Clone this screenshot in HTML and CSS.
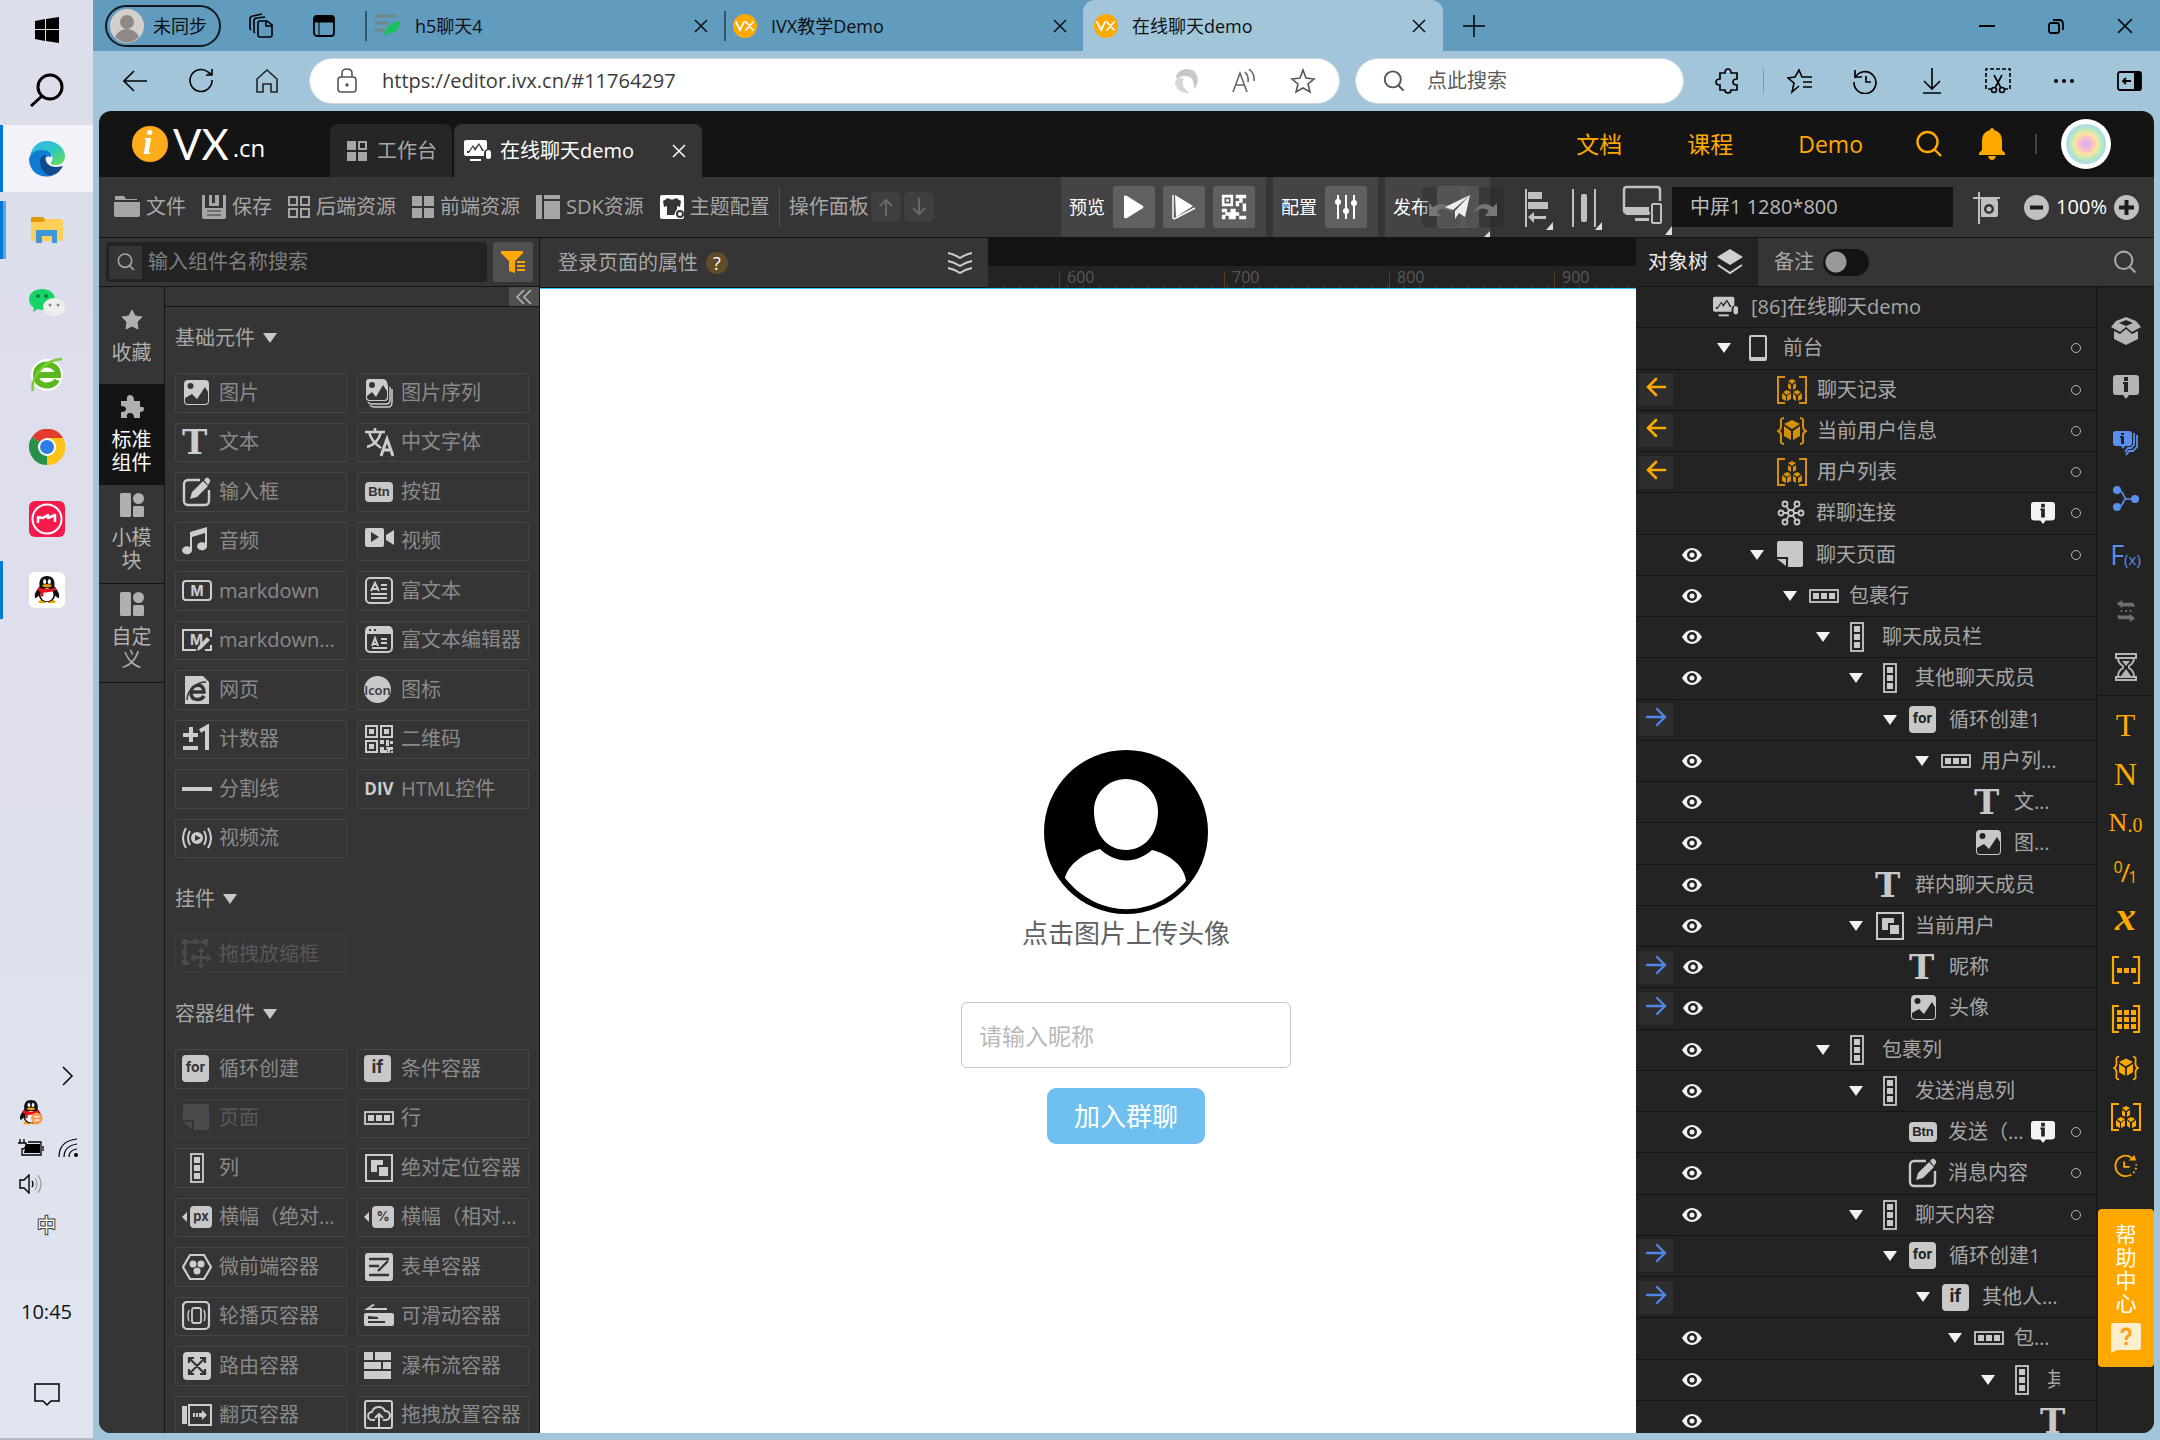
FILE: index.html
```html
<!DOCTYPE html>
<html lang="zh-CN">
<head>
<meta charset="utf-8">
<meta name="viewport" content="width=device-width, initial-scale=1">
<title>在线聊天demo</title>
<link rel="stylesheet" href="styles.css">
</head>
<body>
<svg class="sprite" aria-hidden="true">
  <defs>
    <linearGradient id="edge-top" x1="0" y1="0" x2="1" y2="1"><stop offset="0" stop-color="#35b5f0"/><stop offset=".5" stop-color="#2dc6c2"/><stop offset="1" stop-color="#6fe04a"/></linearGradient>
    <radialGradient id="rainbow"><stop offset="0" stop-color="#c9b8f0"/><stop offset=".3" stop-color="#fbb8cc"/><stop offset=".55" stop-color="#fbe6a0"/><stop offset=".8" stop-color="#b5e8c0"/><stop offset="1" stop-color="#a8d8f0"/></radialGradient>
  </defs>
  <symbol id="i-image" viewBox="0 0 30 30"><path fill="currentColor" fill-rule="evenodd" d="M6 2h17a4 4 0 0 1 4 4v17a4 4 0 0 1-4 4H6a4 4 0 0 1-4-4V6a4 4 0 0 1 4-4zM8.500 5a3 3 0 1 0 0 6 3 3 0 0 0 0-6zM3 20v3c0 2 1 3 3 3h17c2 0 3-1 3-3V14l-3-5-8 12-5-5z"/></symbol>
  <symbol id="i-images" viewBox="0 0 30 30"><path fill="currentColor" fill-rule="evenodd" d="M5 1h13c3 0 4 1 5 3l1 4v12c0 2-1 3-3 3H5c-2 0-3-1-3-3V4c0-2 1-3 3-3zM8 4a3 3 0 1 0 0 6 3 3 0 0 0 0-6zM3 18v1c0 2 1 3 3 3h14c2 0 3-1 3-3v-6l-4-6-7 12-4-5z"/><path d="M4 24c1 2 2 2 4 2h14c3 0 4-1 4-4V9M6 27c1 2 2 2 4 2h14c3 0 4-2 4-5V11" fill="none" stroke="currentColor" stroke-width="1.500"/></symbol>
  <symbol id="i-lang" viewBox="0 0 30 30"><g fill="none" stroke="currentColor" stroke-width="2.600"><path d="M1 5h20M11 1v4M5 5c2 8 6 12 12 16M17 5c-2 8-7 13-14 15"/><path d="M17 29l6-17 6 17M19 23h8" stroke-width="3"/></g></symbol>
  <symbol id="i-edit" viewBox="0 0 30 30"><path d="M18 3H6a4 4 0 0 0-4 4v17a4 4 0 0 0 4 4h17a4 4 0 0 0 4-4V13" fill="none" stroke="currentColor" stroke-width="2.400"/><path fill="currentColor" d="M8 22l2-7L21 4l5 5-11 11zM22 3l2-2c2-1 5 2 4 4l-2 3z"/></symbol>
  <symbol id="i-music" viewBox="0 0 30 30"><path fill="currentColor" d="M8 6l17-5v20a5 4 0 1 1-2-4V7L10 11v14a5 4 0 1 1-2-4z"/></symbol>
  <symbol id="i-video" viewBox="0 0 30 30"><path fill="currentColor" fill-rule="evenodd" d="M3 2h15q2 0 2 2v15q0 2-2 2H3q-2 0-2-2V4q0-2 2-2zm4 4v10l8-5zM22 9l8-5v15l-8-5z"/></symbol>
  <symbol id="i-doc" viewBox="0 0 30 30"><rect x="2" y="2" width="26" height="25" rx="4" fill="none" stroke="currentColor" stroke-width="2"/><path d="M7 15l4-8 4 8M9 13h5M17 9h6M17 13h6M7 18h16M7 22h16" fill="none" stroke="currentColor" stroke-width="2"/></symbol>
  <symbol id="i-doc2" viewBox="0 0 30 30"><rect x="2" y="2" width="26" height="25" rx="4" fill="none" stroke="currentColor" stroke-width="2"/><path fill="currentColor" fill-rule="evenodd" d="M2 9V5q0-4 4-4h18q4 0 4 4v4zM5 4v2h2V4zm5 0v2h2V4z"/><path d="M8 21l3-8 3 8M9 19h5M17 14h6M17 18h6M8 23h15" fill="none" stroke="currentColor" stroke-width="2"/></symbol>
  <symbol id="i-web" viewBox="0 0 30 30"><path fill="currentColor" d="M3 1h18l6 6v22H3z"/><path d="M10 17h12c0-10-13-8-13 1 0 8 10 8 13 3" fill="none" stroke="#353535" stroke-width="3.500"/><path d="M5 25C5 15 15 7 24 7" fill="none" stroke="#353535" stroke-width="1.500"/></symbol>
  <symbol id="i-count" viewBox="0 0 30 30"><path d="M1 11h15M9 3v15M1 24h15M18 7l7-4v23" fill="none" stroke="currentColor" stroke-width="4"/></symbol>
  <symbol id="i-qr" viewBox="0 0 30 30"><path fill="currentColor" fill-rule="evenodd" d="M1 1h13v13H1zM3 3v9h9V3zM5 5h5v5H5zM16 1h13v13H16zM18 3v9h9V3zM20 5h5v5h-5zM1 16h13v13H1zM3 18v9h9v-9zM5 20h5v5H5zM16 16h4v4h-4zM22 16h3v6h-3zM26 17h3v3h-3zM16 23h4v3h4v3h-8zM22 23h7v3h-3v3h-2zM27 27h2v2h-2z"/></symbol>
  <symbol id="i-line" viewBox="0 0 30 30"><path fill="currentColor" d="M0 13h30v4H0z"/></symbol>
  <symbol id="i-stream" viewBox="0 0 30 30"><path fill="currentColor" fill-rule="evenodd" d="M15 9a6 6 0 1 0 0 12 6 6 0 0 0 0-12zm-2 3l6 3-6 3z"/><path d="M8 8q-4 7 0 14M22 8q4 7 0 14M4 5q-6 10 0 20M26 5q6 10 0 20" fill="none" stroke="currentColor" stroke-width="2"/></symbol>
  <symbol id="i-drag" viewBox="0 0 30 30"><path d="M24 8V3H3v21h5" fill="none" stroke="currentColor" stroke-width="2.500"/><path fill="currentColor" d="M0 0h5v5H0zM11 0h5v5h-5zM21 0h5v5h-5zM0 11h5v5H0zM0 21h5v5H0zM19 8l4 5h-3v4h5v-3l5 5-5 4v-3h-5v5h3l-4 5-4-5h3v-5h-5v3l-5-4 5-5v3h5v-4h-3z"/></symbol>
  <symbol id="i-page" viewBox="0 0 30 30"><path fill="currentColor" d="M3 1h22q2 0 2 2v22q0 2-2 2H12V17H1V3q0-2 2-2zM1 19h9v7z"/></symbol>
  <symbol id="i-row" viewBox="0 0 30 30"><rect x="1" y="9" width="28" height="12" fill="none" stroke="currentColor" stroke-width="1.800"/><path fill="currentColor" d="M4 12h6v6H4zM12 12h6v6h-6zM20 12h6v6h-6z"/></symbol>
  <symbol id="i-col" viewBox="0 0 30 30"><rect x="9" y="1" width="12" height="28" fill="none" stroke="currentColor" stroke-width="1.800"/><path fill="currentColor" d="M12 4h6v6h-6zM12 12h6v6h-6zM12 20h6v6h-6z"/></symbol>
  <symbol id="i-abs" viewBox="0 0 30 30"><rect x="2" y="2" width="26" height="26" fill="none" stroke="currentColor" stroke-width="2"/><path fill="currentColor" d="M7 7h12v5h-6v7H7zM15 14h9v9h-9z"/></symbol>
  <symbol id="i-hex" viewBox="0 0 30 30"><path d="M8 3h14l7 12-7 12H8L1 15z" fill="none" stroke="currentColor" stroke-width="2.200"/><circle cx="11" cy="12" r="3.500" fill="currentColor"/><circle cx="19" cy="12" r="3.500" fill="currentColor"/><circle cx="15" cy="19" r="3.500" fill="currentColor"/></symbol>
  <symbol id="i-form" viewBox="0 0 30 30"><rect x="1" y="1" width="28" height="28" rx="3" fill="currentColor"/><path d="M5 7h20M5 14h10M5 23h20M14 19L24 9" fill="none" stroke="#353535" stroke-width="2.400"/></symbol>
  <symbol id="i-carousel" viewBox="0 0 30 30"><rect x="1" y="1" width="26" height="27" rx="4" fill="none" stroke="currentColor" stroke-width="2.200"/><rect x="10" y="7" width="9" height="15" rx="2" fill="none" stroke="currentColor" stroke-width="1.800"/><path d="M7 9q-2 6 0 11M22 9q2 6 0 11" fill="none" stroke="currentColor" stroke-width="1.400"/></symbol>
  <symbol id="i-slide" viewBox="0 0 30 30"><path fill="currentColor" fill-rule="evenodd" d="M0 9L9 3l2 1-5 3h17v2zM2 12h26q2 0 2 2v9q0 2-2 2H2q-2 0-2-2v-9q0-2 2-2zm2 3v3h10v-2zm0 5v2h17v-2z"/></symbol>
  <symbol id="i-route" viewBox="0 0 30 30"><rect x="1" y="1" width="28" height="28" rx="4" fill="currentColor"/><path d="M8 8l14 14M22 8L8 22M7 12V7h5M18 7h5v5M7 18v5h5M18 23h5v-5" fill="none" stroke="#353535" stroke-width="2.200"/></symbol>
  <symbol id="i-fall" viewBox="0 0 30 30"><path fill="currentColor" d="M0 1h9v8H0zM11 1h16v8H11zM0 11h17v7H0zM19 11h8v7h-8zM0 20h27v8H0z"/></symbol>
  <symbol id="i-flip" viewBox="0 0 30 30"><path fill="currentColor" d="M0 6h5v18H0zM11 13h2v4h-2zM14 13h2v4h-2zM17 13h3v-3l5 5-5 5v-3h-3z"/><rect x="7" y="5" width="22" height="20" fill="none" stroke="currentColor" stroke-width="2"/></symbol>
  <symbol id="i-drop" viewBox="0 0 30 30"><rect x="1" y="1" width="27" height="27" rx="2" fill="none" stroke="currentColor" stroke-width="2"/><path d="M11 20H8a4 4 0 0 1 0-8 7 7 0 0 1 13-1 4 4 0 0 1 1 9h-3M15 28V15M11 18l4-4 4 4" fill="none" stroke="currentColor" stroke-width="2"/></symbol>
  <symbol id="i-mdedit" viewBox="0 0 30 30"><path d="M29 12V5H1v20h13M23 25h6v-5" fill="none" stroke="currentColor" stroke-width="2"/><path fill="currentColor" d="M16 22L25 12l3 3-9 9-4 2z"/></symbol>
  <symbol id="i-star" viewBox="0 0 24 24"><path fill="currentColor" stroke="currentColor" stroke-linejoin="round" d="M12 2l3 6 7 1-5 5 1 7-6-3-6 3 1-7-5-5 7-1z"/></symbol>
  <symbol id="i-puzzle" viewBox="0 0 24 24"><path fill="currentColor" d="M1 6h6q-1-6 3-6t4 6h6v6q4-1 4 2t-4 3v6h-6q0-5-4-5t-3 5H1v-6q5 0 5-3t-5-3z"/></symbol>
  <symbol id="i-module" viewBox="0 0 24 24"><rect width="11" height="24" rx="1.500" fill="currentColor"/><circle cx="18.500" cy="5.500" r="5.500" fill="currentColor"/><rect x="13" y="13" width="11" height="11" rx="1.500" fill="currentColor"/></symbol>
  <symbol id="i-screen" viewBox="0 0 28 24"><path fill="currentColor" fill-rule="evenodd" d="M2 1h19q2 0 2 2v7q-3 1-3 4v3H2q-2 0-2-2V3q0-2 2-2zm1 11v2h2l4-6 2 4 4-6 3 6h2l-5-8-4 5-2-3-4 6z"/><path fill="currentColor" d="M6 20h11v2H6z"/><rect x="22" y="11" width="5" height="9" rx="2.500" fill="currentColor"/></symbol>
  <symbol id="i-phone" viewBox="0 0 30 30"><path fill="currentColor" fill-rule="evenodd" d="M8 2h14q2 0 2 2v22q0 2-2 2H8q-2 0-2-2V4q0-2 2-2zm0 2v20h14V4z"/></symbol>
  <symbol id="i-cube" viewBox="0 0 30 30"><path d="M7 2Q3 2 4 7v3q0 4-3 5 3 1 3 5v3q-1 5 3 5M23 2q4 0 3 5v3q0 4 3 5-3 1-3 5v3q1 5-3 5" fill="none" stroke="currentColor" stroke-width="2"/><path fill="currentColor" d="M15 4l8 4-8 5-8-5zM7 10l7 5v9l-7-4zM23 10l-7 5v9l7-4z"/></symbol>
  <symbol id="i-cubes" viewBox="0 0 30 30"><path d="M8 2H1v26h7M22 2h7v26h-7" fill="none" stroke="currentColor" stroke-width="2"/><path fill="currentColor" d="M15 4l4 2-4 3-4-3zM11 8l3 2v5l-3-2zM19 8l-3 2v5l3-2zM10 15l4 2-4 3-4-3zM5 18l4 3v5l-4-2zM14 18l-4 3v5l4-2zM20 15l4 2-4 3-4-3zM16 18l3 3v5l-3-2zM25 18l-4 3v5l4-2z"/></symbol>
  <symbol id="i-net" viewBox="0 0 30 30"><g fill="none" stroke="currentColor" stroke-width="1.800"><circle cx="15" cy="15" r="3"/><circle cx="9" cy="6" r="2.500"/><circle cx="21" cy="6" r="2.500"/><circle cx="5" cy="15" r="2.500"/><circle cx="25" cy="15" r="2.500"/><circle cx="9" cy="24" r="2.500"/><circle cx="21" cy="24" r="2.500"/><path d="M13 12l-3-4M17 12l3-4M12 15H8M18 15h4M13 18l-3 4M17 18l3 4"/></g></symbol>
  <symbol id="i-eye" viewBox="0 0 20 16"><path fill="currentColor" fill-rule="evenodd" d="M0 8q4-7 10-7t10 7q-4 7-10 7T0 8zM10 3a5 5 0 1 0 0 10 5 5 0 0 0 0-10z"/><circle cx="10" cy="8" r="2.500" fill="currentColor"/></symbol>
  <symbol id="i-in" viewBox="0 0 22 22"><path d="M20 11H3M11 3l-8 8 8 8" fill="none" stroke="#ffa800" stroke-width="2.600" stroke-linecap="round"/></symbol>
  <symbol id="i-out" viewBox="0 0 22 22"><path d="M2 11h17M12 3l8 8-8 8" fill="none" stroke="#4f86e8" stroke-width="2.300" stroke-linecap="round"/></symbol>
  <symbol id="i-info" viewBox="0 0 26 26"><path fill="currentColor" fill-rule="evenodd" d="M3 1h20q3 0 3 3v14q0 3-3 3h-7l-3 4-3-4H3q-3 0-3-3V4q0-3 3-3zm8 2v4h4V3zM10 8v2h1v8h4V8z"/></symbol>
  <symbol id="i-infos" viewBox="0 0 26 26"><path fill="currentColor" fill-rule="evenodd" d="M3 1h13q3 0 3 3v9q0 3-3 3h-4l-2 3-2-3H3q-3 0-3-3V4q0-3 3-3zm5 2v2h3V3zM7 6v2h1v6h3V6z"/><path d="M21 3v12l-3 3h-3l-3 4M24 5v12l-4 4h-4l-3 4" fill="none" stroke="currentColor" stroke-width="1.800"/></symbol>
  <symbol id="i-box" viewBox="0 0 30 28"><path fill="currentColor" fill-rule="evenodd" d="M15 0l10 4 5 6-9 5-6-5-6 5-9-5 5-6zm0 3L8 6l7 3 7-3zM3 14l6 3 6-5 6 5 6-3v8l-12 6-12-6z"/></symbol>
  <symbol id="i-branch" viewBox="0 0 26 26"><circle cx="4" cy="4" r="4" fill="currentColor"/><circle cx="4" cy="21" r="4" fill="currentColor"/><circle cx="22" cy="13" r="4" fill="currentColor"/><path d="M4 4q4 0 6 4 2 5 4 5h7M4 21q4 0 6-4 1-4 4-4" fill="none" stroke="currentColor" stroke-width="1.700"/></symbol>
  <symbol id="i-swap" viewBox="0 0 26 26"><path fill="currentColor" d="M3 5l6-4v3h11q3 1 2 5l-2-1H9v2zM23 21l-6 4v-3H6q-3-1-2-5l2 1h11v-2zM7 12h2v2H7zM12 12h2v2h-2zM17 12h2v2h-2z"/></symbol>
  <symbol id="i-hour" viewBox="0 0 26 30"><path d="M3 2h20v4H3zM3 25h20v3H3zM5 6q0 5 5 8v2q-5 3-5 8M21 6q0 5-5 8v2q5 3 5 8" fill="none" stroke="currentColor" stroke-width="2"/><path fill="currentColor" d="M8 24l5-7 5 7zM9 9h8l-4 5z"/></symbol>
  <symbol id="i-arr" viewBox="0 0 30 30"><path d="M8 2H2v26h6M22 2h6v26h-6" fill="none" stroke="currentColor" stroke-width="2.200"/><path fill="currentColor" d="M6 13h5v5H6zM13 13h5v5h-5zM20 13h5v5h-5z"/></symbol>
  <symbol id="i-arr2" viewBox="0 0 30 30"><path d="M8 2H2v26h6M22 2h6v26h-6" fill="none" stroke="currentColor" stroke-width="2.200"/><path fill="currentColor" d="M6 6h5v5H6zM13 6h5v5h-5zM20 6h5v5h-5zM6 13h5v5H6zM13 13h5v5h-5zM20 13h5v5h-5zM6 20h5v5H6zM13 20h5v5h-5zM20 20h5v5h-5z"/></symbol>
  <symbol id="i-time" viewBox="0 0 26 26"><path d="M19 4A11 11 0 1 0 17 23" fill="none" stroke="currentColor" stroke-width="2"/><path d="M11 8v6h6" fill="none" stroke="currentColor" stroke-width="2"/><path d="M17 23A11 11 0 0 0 24 11" fill="none" stroke="currentColor" stroke-width="2" stroke-dasharray="2 2.500"/><path fill="currentColor" d="M16 7h8l-2-6z"/></symbol>
  <symbol id="i-search" viewBox="0 0 30 30"><circle cx="13.500" cy="13" r="10" fill="none" stroke="currentColor" stroke-width="2.400"/><path d="M20 20l7 7" stroke="currentColor" stroke-width="2.400"/></symbol>
  <symbol id="i-close" viewBox="0 0 14 14"><path d="M1 1l12 12M13 1L1 13" fill="none" stroke="currentColor" stroke-width="1.500"/></symbol>
  <symbol id="i-vx" viewBox="0 0 24 24"><circle cx="12" cy="12" r="12" fill="#ffa800"/><path d="M3 8l4 8 4-8M13 8l7 8M20 8l-7 8" fill="none" stroke="#fff" stroke-width="1.800" stroke-linecap="round"/></symbol>
  <symbol id="i-penguin" viewBox="0 0 28 30"><path fill="#f5a000" d="M5 27q4-3 8 0v2H5zM15 27q4-3 8 0v2h-8z"/><path fill="#111" d="M14 0c6 0 9 4 8 11 3 4 6 8 5 12-1 2-3-1-4-2-1 4-4 7-9 7s-8-3-9-7c-1 1-3 4-4 2-1-4 2-8 5-12C5 4 8 0 14 0z"/><ellipse cx="14" cy="20" rx="7" ry="7" fill="#fff"/><path fill="#e8121c" d="M5 12q9 4 18 0l1 3q-7 3-14 3v4H7v-5q-2-1-3-2z"/><ellipse cx="11.500" cy="6" rx="1.700" ry="2.500" fill="#fff"/><ellipse cx="16.500" cy="6" rx="1.700" ry="2.500" fill="#fff"/><ellipse cx="14" cy="10.500" rx="5" ry="1.600" fill="#f5a000"/></symbol>
</svg>

<div class="desktop">
  <aside class="taskbar" aria-label="任务栏">
    <div class="task-head">
      <button class="task" aria-label="开始"><svg width="24" height="26" viewBox="0 0 24 26"><path d="M0 4l10-2v10H0zM11 2l13-2v12H11zM0 13h10v11L0 22zM11 13h13v13l-13-2z"/></svg></button>
      <button class="task" aria-label="搜索"><svg width="34" height="34" viewBox="0 0 34 34" fill="none" stroke="#000" stroke-width="3"><circle cx="20" cy="14" r="12"/><path d="M12 23L1 33"/></svg></button>
    </div>
    <div class="task-apps">
      <button class="task is-current is-open" aria-label="Edge"><svg width="36" height="36" viewBox="0 0 36 36"><path fill="url(#edge-top)" d="M1 15C3 5 10 0 18 0c10 0 18 7 18 15 0 6-4 9-9 9-6 0-6-2-4-4 2-4-1-9-9-9C8 11 3 13 1 15z"/><path fill="#0f7bd3" d="M0 18C1 12 7 9 13 9c8 0 10 5 9 7-7-3-9 6-6 11 2 4 6 7 9 7C12 39 0 31 0 18z"/><path fill="#114a8b" d="M11 20c0-4 3-6 6-6-2 6 2 12 10 12 3 0 6-1 6-1 1 0 0 2-1 3-8 12-21 5-21-8z"/></svg></button>
      <button class="task is-multi" aria-label="文件管理器"><svg width="32" height="26" viewBox="0 0 32 26"><path fill="#dd9a05" d="M0 2q0-2 2-2h10l3 3-2 3H0z"/><path fill="#ffcf59" d="M0 5h12l3-3h15q2 0 2 2v18q0 2-2 2H2q-2 0-2-2z"/><path fill="#3b96da" d="M5 14q0-1 1-1h20v13h-5v-7H11v7H5z"/></svg></button>
      <button class="task" aria-label="微信"><svg width="36" height="30" viewBox="0 0 36 30"><path fill="#16d466" d="M13 1c7 0 13 4 13 10s-6 11-13 11l-4-1-5 3 1-4C2 18 0 15 0 11 0 5 6 1 13 1z"/><circle cx="9" cy="8" r="1.800" fill="#0d6b3b"/><circle cx="17" cy="8" r="1.800" fill="#0d6b3b"/><ellipse cx="25" cy="19" rx="11" ry="9" fill="#eee"/><circle cx="21" cy="17" r="1.500" fill="#888"/><circle cx="29" cy="17" r="1.500" fill="#888"/></svg></button>
      <button class="task" aria-label="360浏览器"><svg width="34" height="36" viewBox="0 0 34 36"><circle cx="17" cy="18" r="16" fill="#fff"/><path d="M6 18h22c0-14-22-14-22 0 0 13 17 13 21 5" fill="none" stroke="#5cb81f" stroke-width="6"/><path d="M3 34C0 20 16 2 32 2" fill="none" stroke="#79cf32" stroke-width="2.500"/></svg></button>
      <button class="task" aria-label="Chrome"><svg width="36" height="36" viewBox="0 0 36 36"><path fill="#e33b2e" d="M18 18L3 8a18 18 0 0 1 31 1z"/><path fill="#fcc419" d="M18 18l16-9a18 18 0 0 1-16 27z"/><path fill="#299147" d="M18 18v18A18 18 0 0 1 3 8z"/><path fill="#fcc419" d="M18 9h16l-8 13-8 14 8-17z"/><circle cx="18" cy="18" r="9" fill="#fff"/><circle cx="18" cy="18" r="7" fill="#317bea"/></svg></button>
      <button class="task" aria-label="Meitu"><svg width="36" height="36" viewBox="0 0 36 36"><rect width="36" height="36" rx="6" fill="#f5194c"/><circle cx="18" cy="18" r="14.500" fill="none" stroke="#fff" stroke-width="2"/><path d="M9 22v-6l5 1 5-3v3l7-3v7" fill="none" stroke="#fff" stroke-width="2.500" stroke-linejoin="round"/></svg></button>
      <button class="task is-tall" aria-label="QQ"><span class="qq-tile"><svg width="26" height="30"><use href="#i-penguin"/></svg></span></button>
    </div>
    <div class="tray">
      <button class="tray-more" aria-label="更多"><svg width="12" height="20" viewBox="0 0 12 20"><path d="M1 1l9 9-9 9" fill="none" stroke="#000" stroke-width="1.500"/></svg></button>
      <div class="tray-grid">
        <svg width="24" height="25" viewBox="0 0 28 30"><use href="#i-penguin"/><circle cx="21" cy="22" r="7" fill="#ff9a55"/><path d="M18 20h6M18 24h6" stroke="#fff" stroke-width="1.500"/></svg>
        <span></span>
        <svg width="26" height="18" viewBox="0 0 26 18"><path d="M8 5h14v9H6z"/><path d="M2 0v4M6 0v4M0 4h8v3q-1 3-4 3v6h19V3H10M25 7v5" fill="none" stroke="#000" stroke-width="1.300"/></svg>
        <svg width="20" height="20" viewBox="0 0 20 20"><path d="M1 19Q1 3 19 1M6 19q0-11 13-13M11 19q0-7 8-8" fill="none" stroke="#000" stroke-width="1.200"/><circle cx="18" cy="17" r="2"/></svg>
        <svg width="24" height="20" viewBox="0 0 24 20"><path d="M1 6h4l5-5v18l-5-5H1zM13 7q2 3 0 6" fill="none" stroke="#000" stroke-width="1.400"/><path d="M16 4q4 6 0 12M19 1q6 9 0 18" fill="none" stroke="#999" stroke-width="1.200"/></svg>
        <span></span>
      </div>
      <span class="ime">中</span>
      <time class="clock">10:45</time>
      <button class="notice" aria-label="通知"><svg width="26" height="26" viewBox="0 0 26 26"><path d="M1 2h24v17h-8l-4 4-4-4H1z" fill="none" stroke="#000" stroke-width="1.500"/></svg></button>
    </div>
  </aside>

  <div class="browser">
    <header class="tabstrip">
      <button class="profile"><svg width="34" height="34" viewBox="0 0 34 34"><circle cx="17" cy="17" r="17" fill="#d3d0cc"/><circle cx="17" cy="13" r="7" fill="#8f8a86"/><path fill="#8f8a86" d="M5 28q4-8 12-8t12 8q-12 11-24 0z"/></svg><span>未同步</span></button>
      <button class="bar-btn workspace" aria-label="工作区"><svg width="26" height="26" viewBox="0 0 26 26" fill="none" stroke="#000" stroke-width="1.600"><path d="M12 8h7l5 4v10q0 2-2 2H12q-2 0-2-2V10q0-2 2-2zM18 8v5h6M7 20l-1-1V8q0-3 3-3l8-1M3 17l-1-1V6q0-3 3-3l9-2"/></svg></button>
      <button class="bar-btn tabmenu" aria-label="标签操作"><svg width="24" height="24" viewBox="0 0 24 24"><rect x="2" y="2" width="20" height="20" rx="3" fill="none" stroke="#000" stroke-width="1.800"/><path d="M2 3q0-1 2-1h16q2 0 2 2v4H2zM7 8v14" stroke="#000"/></svg></button>
      <a class="tab tab-a" href="#h5"><svg width="26" height="24" viewBox="0 0 26 24"><path d="M0 2h21M0 9h13M0 16h10" stroke="#6f8787" stroke-width="3"/><path fill="#19c15b" d="M9 23q0-13 16-16-1 13-12 12z"/></svg><span>h5聊天4</span><svg class="x" width="14" height="14"><use href="#i-close"/></svg></a>
      <a class="tab tab-b" href="#ivx"><svg width="24" height="24"><use href="#i-vx"/></svg><span>IVX教学Demo</span><svg class="x" width="14" height="14"><use href="#i-close"/></svg></a>
      <a class="tab tab-c is-active" href="#chat"><svg width="24" height="24"><use href="#i-vx"/></svg><span>在线聊天demo</span><svg class="x" width="14" height="14"><use href="#i-close"/></svg></a>
      <button class="bar-btn newtab" aria-label="新标签页"><svg width="22" height="22" viewBox="0 0 22 22"><path d="M11 0v22M0 11h22" stroke="#000" stroke-width="1.500"/></svg></button>
      <div class="window-ctl">
        <button class="bar-btn" aria-label="最小化"><svg width="16" height="16" viewBox="0 0 16 16"><path d="M0 8h16" stroke="#000" stroke-width="2"/></svg></button>
        <button class="bar-btn" aria-label="还原"><svg width="16" height="16" viewBox="0 0 16 16" fill="none" stroke="#000" stroke-width="1.800"><rect x="1" y="5" width="10" height="10" rx="2"/><path d="M5 2h6q4 0 4 4v6"/></svg></button>
        <button class="bar-btn" aria-label="关闭"><svg width="16" height="16"><use href="#i-close"/></svg></button>
      </div>
    </header>

    <nav class="navbar">
      <button class="bar-btn" aria-label="后退"><svg width="24" height="22" viewBox="0 0 24 22" fill="none" stroke="#000" stroke-width="1.600"><path d="M24 11H1M11 1L1 11l10 10"/></svg></button>
      <button class="bar-btn" aria-label="刷新"><svg width="26" height="26" viewBox="0 0 26 26" fill="none" stroke="#000" stroke-width="1.600"><path d="M24 12a11 11 0 1 1-4-8l4 3M24 1v6h-6"/></svg></button>
      <button class="bar-btn" aria-label="主页"><svg width="24" height="26" viewBox="0 0 24 26" fill="none" stroke="#222" stroke-width="1.600"><path d="M2 11L12 2l10 9v13h-6v-8H8v8H2z"/></svg></button>
      <form class="address">
        <svg width="20" height="26" viewBox="0 0 20 26" fill="none" stroke="#555" stroke-width="1.600"><rect x="1" y="9" width="18" height="15" rx="3"/><path d="M5 9V5q0-4 5-4t5 4v4"/><circle cx="10" cy="17" r="1"/></svg>
        <input aria-label="地址" value="https://editor.ivx.cn/#11764297">
        <button type="button" class="bar-btn" aria-label="扩展"><svg width="24" height="26" viewBox="0 0 24 26"><path fill="#c8c8c8" d="M2 8C5 1 14-1 20 3c5 5 5 13 0 18 0-9-2-13-9-13-4 0-7 2-8 4z"/><path fill="#d6d6d6" d="M1 14c2-4 6-5 9-3-3 4-1 10 6 14C8 26 1 21 1 14z"/></svg></button>
        <button type="button" class="bar-btn" aria-label="朗读"><svg width="24" height="24" viewBox="0 0 24 24" fill="none" stroke="#666" stroke-width="1.600"><path d="M1 23L8 4l7 19M4 16h9M13 3q4 4 3 10M17 0q6 5 5 12"/></svg></button>
        <button type="button" class="bar-btn" aria-label="收藏"><svg width="26" height="26" viewBox="0 0 26 26" fill="none" stroke="#555" stroke-width="1.600"><path d="M13 2l3 8 8 1-6 5 2 8-7-4-7 4 2-8-6-5 8-1z"/></svg></button>
      </form>
      <form class="quicksearch"><svg width="24" height="24"><use href="#i-search"/></svg><input aria-label="搜索" placeholder="点此搜索"></form>
      <div class="nav-tools">
        <button class="bar-btn" aria-label="插件"><svg width="26" height="26" viewBox="0 0 26 26" fill="none" stroke="#000" stroke-width="1.700"><path d="M5 5h5q0-4 3-4t3 4h6v6q-4 0-4 3t4 3v5h-6q0 3-3 3t-3-3H5v-5q-4 0-4-3t4-3z"/></svg></button>
        <i class="rule"></i>
        <button class="bar-btn" aria-label="收藏夹"><svg width="26" height="26" viewBox="0 0 26 26" fill="none" stroke="#000" stroke-width="1.600"><path d="M12 18l-7 6 2-9-6-5 7-1 4-7 3 7h10M16 14h9M16 19h9"/></svg></button>
        <button class="bar-btn" aria-label="历史"><svg width="26" height="26" viewBox="0 0 26 26" fill="none" stroke="#000" stroke-width="1.700"><path d="M2 10a11 11 0 1 1-1 4M2 2v7h7M13 8v6h5"/></svg></button>
        <button class="bar-btn" aria-label="下载"><svg width="20" height="26" viewBox="0 0 20 26" fill="none" stroke="#000" stroke-width="1.600"><path d="M10 0v21M2 13l8 8 8-8M1 25h18"/></svg></button>
        <button class="bar-btn" aria-label="截图"><svg width="26" height="26" viewBox="0 0 26 26" fill="none" stroke="#000" stroke-width="1.600"><path d="M7 21H1V1h24v20h-5" stroke-dasharray="4 2"/><path d="M9 7l7 13M17 7l-7 13"/><circle cx="9" cy="22" r="2.500"/><circle cx="17" cy="22" r="2.500"/></svg></button>
        <button class="bar-btn" aria-label="更多"><svg width="22" height="6" viewBox="0 0 22 6"><circle cx="3" cy="3" r="2"/><circle cx="11" cy="3" r="2"/><circle cx="19" cy="3" r="2"/></svg></button>
        <button class="bar-btn" aria-label="侧栏"><svg width="26" height="20" viewBox="0 0 26 20"><rect x="1" y="1" width="23" height="18" rx="2" fill="none" stroke="#000" stroke-width="1.800"/><path d="M17 1h7v18h-7z"/><path d="M14 10H6M9 7l-3 3 3 3" fill="none" stroke="#000" stroke-width="1.800"/></svg></button>
      </div>
    </nav>

    <main class="app">
      <header class="app-head">
        <a class="logo" href="#home"><svg width="36" height="36" viewBox="0 0 36 36"><circle cx="18" cy="18" r="18" fill="#ffac1c"/></svg><span class="logo-i">i</span><span class="logo-vx">VX</span><span class="logo-cn">.cn</span></a>
        <a class="doc-tab doc-home" href="#workbench"><svg width="20" height="20" viewBox="0 0 20 20"><path fill="currentColor" fill-rule="evenodd" d="M0 0h9v9H0zM11 0h9v9h-9zM13 2v5h5V2zM0 11h9v9H0zM11 11h9v9h-9z"/></svg><span>工作台</span></a>
        <a class="doc-tab doc-open" href="#chat"><svg width="28" height="24"><use href="#i-screen"/></svg><span>在线聊天demo</span><svg class="x" width="14" height="14"><use href="#i-close"/></svg></a>
        <nav class="head-nav">
          <a href="#doc">文档</a><a href="#course">课程</a><a href="#demo">Demo</a>
          <button class="hd-search" aria-label="搜索"><svg width="30" height="30"><use href="#i-search"/></svg></button>
          <button class="hd-bell" aria-label="通知"><svg width="30" height="34" viewBox="0 0 30 34"><path fill="currentColor" d="M13 3q0-2 2-2t2 2q8 2 8 11v9l3 3v2H2v-2l3-3v-9q0-9 8-11zM11 29h8q-1 4-4 4t-4-4z"/></svg></button>
          <i class="rule"></i>
          <svg class="me" width="50" height="50" viewBox="0 0 50 50"><circle cx="25" cy="25" r="25" fill="#fff"/><circle cx="25" cy="25" r="20" fill="url(#rainbow)"/></svg>
        </nav>
      </header>

      <div class="toolbar">
        <div class="menu">
          <button><svg width="26" height="22" viewBox="0 0 26 22"><path fill="currentColor" d="M1 0h9l2 3h11v1H1zM0 6h26v13q0 2-2 2H2q-2 0-2-2z"/></svg>文件</button>
          <button><svg width="24" height="24" viewBox="0 0 24 24"><path fill="currentColor" d="M0 0h3v13h18V0h3v22q0 2-2 2H2q-2 0-2-2zM7 0h3v8h3V0h4v11H7z"/><path d="M5 16h14M5 20h14" stroke="#353535"/></svg>保存</button>
          <button><svg width="22" height="22" viewBox="0 0 22 22"><path d="M1 1h8v8H1zM13 1h8v8h-8zM1 13h8v8H1zM13 13h8v8h-8z" fill="none" stroke="currentColor" stroke-width="2"/></svg>后端资源</button>
          <button><svg width="22" height="22" viewBox="0 0 22 22"><path d="M0 0h10v10H0zM12 0h10v10H12zM0 12h10v10H0zM12 12h10v10H12z" fill="currentColor"/></svg>前端资源</button>
          <button><svg width="24" height="24" viewBox="0 0 24 24"><path d="M0 0h6v24H0zM8 0h16v4H8zM8 6h16v18H8z" fill="currentColor"/></svg>SDK资源</button>
          <button><svg width="24" height="24" viewBox="0 0 24 24"><rect width="24" height="24" rx="2" fill="#fff"/><path fill="#353535" d="M3 6l5-3q4 3 8 0l5 3-1 6-3-1v3l-3 6H7V11l-3 1z"/><circle cx="20" cy="19" r="5" fill="#fff"/><circle cx="20" cy="19" r="3" fill="none" stroke="#353535" stroke-width="2"/></svg>主题配置</button>
        </div>
        <div class="panel-ops"><span>操作面板</span><button aria-label="上移"><svg width="16" height="18" viewBox="0 0 16 18"><path d="M8 18V2M2 8l6-6 6 6" fill="none" stroke="currentColor" stroke-width="2"/></svg></button><button aria-label="下移"><svg width="16" height="18" viewBox="0 0 16 18"><path d="M8 0v16M2 10l6 6 6-6" fill="none" stroke="currentColor" stroke-width="2"/></svg></button></div>
        <div class="runs">
          <div class="run"><span>预览</span>
            <button aria-label="预览"><svg width="24" height="26" viewBox="0 0 24 26"><path fill="#fff" d="M2 3q0-3 3-1l16 10q1 1 0 2L5 24q-3 1-3-1z"/></svg></button>
            <button aria-label="调试"><svg width="26" height="28" viewBox="0 0 26 28"><path fill="#fff" d="M4 2l18 11L5 24z"/><path d="M2 2v22q0 3 3 1l19-10" fill="none" stroke="#fff" stroke-width="1.500"/></svg></button>
            <button aria-label="二维码预览"><svg width="26" height="26" viewBox="0 0 30 30"><path fill="#fff" fill-rule="evenodd" d="M1 1h13v13H1zM4 4v7h7V4zM6 6h3v3H6zM17 1h12v4h-4v5h-4v4h-4V8h4V5h-4zM25 11h4v9h-4zM1 17h6v4h4v-4h6v4h4v4h-4v4H9v-4H5v4H1v-5h4v-3H1zM21 25h8v4h-8z"/></svg></button>
          </div>
          <div class="run"><span>配置</span><button aria-label="配置"><svg width="24" height="24" viewBox="0 0 24 24"><path d="M4 0v24M12 0v24M20 0v24" stroke="#fff" stroke-width="2"/><circle cx="4" cy="7" r="3" fill="#fff"/><circle cx="12" cy="16" r="3" fill="#fff"/><circle cx="20" cy="8" r="3" fill="#fff"/></svg></button></div>
          <div class="run publish"><span>发布</span>
            <div class="history"><button aria-label="撤销"><svg width="24" height="20" viewBox="0 0 24 20"><path fill="currentColor" d="M0 6v13h12l-4-5q6-6 16 2Q16 2 4 10z"/></svg></button><button aria-label="重做"><svg width="24" height="20" viewBox="0 0 24 20"><path fill="currentColor" d="M24 6v13H12l4-5Q10 8 0 16 8 2 20 10z"/></svg></button></div>
            <button class="send" aria-label="发布"><svg width="26" height="26" viewBox="0 0 26 26"><path fill="#eee" d="M25 1L0 13l8 3zM25 1L10 17v8l4-6 6 4z"/></svg></button>
          </div>
        </div>
        <div class="view-tools">
          <button class="v-align" aria-label="对齐"><svg width="30" height="46" viewBox="0 0 30 46"><path fill="currentColor" d="M2 5h2v38H2zM5 8h14v7H5zM5 18h20v7H5zM5 33l6-5v4h12v3H11v4z"/><path fill="#ddd" d="M30 38v8h-7z"/></svg></button>
          <button class="v-dist" aria-label="分布"><svg width="32" height="46" viewBox="0 0 32 46"><path fill="currentColor" d="M2 5h2v38H2zM24 5h2v38h-2z"/><rect x="11" y="10" width="6" height="28" rx="2" fill="currentColor"/><path fill="#ddd" d="M32 38v8h-7z"/></svg></button>
          <button class="v-device" aria-label="设备"><svg width="52" height="56" viewBox="0 0 52 56"><path d="M30 34H7q-3 0-3-3V11q0-3 3-3h30q3 0 3 3v11" fill="none" stroke="currentColor" stroke-width="2.500"/><path fill="currentColor" d="M4 28h25v8H6zM15 39h14v3H15z"/><rect x="32" y="25" width="9" height="19" rx="1" fill="none" stroke="currentColor" stroke-width="2"/><path fill="#ddd" d="M52 47v9h-7z"/></svg></button>
          <select class="screen" aria-label="屏幕尺寸"><option>中屏1 1280*800</option></select>
          <button class="v-cam" aria-label="截图"><svg width="34" height="34" viewBox="0 0 34 34"><path d="M7 2v32M1 8h27" stroke="currentColor" stroke-width="2"/><path fill="currentColor" fill-rule="evenodd" d="M10 9h15l1 3v13q0 2-2 2H9V9zm7 5a5 5 0 1 0 0 10 5 5 0 0 0 0-10z"/><circle cx="17" cy="19" r="2.500" fill="currentColor"/></svg></button>
          <button class="v-zoom" aria-label="缩小"><svg width="25" height="25" viewBox="0 0 25 25"><circle cx="12.500" cy="12.500" r="12.500" fill="currentColor"/><path d="M6 12.500h13" stroke="#1c1c1c" stroke-width="4"/></svg></button>
          <output>100%</output>
          <button class="v-zoom" aria-label="放大"><svg width="25" height="25" viewBox="0 0 25 25"><circle cx="12.500" cy="12.500" r="12.500" fill="currentColor"/><path d="M5 12.500h15M12.500 5v15" stroke="#1c1c1c" stroke-width="4"/></svg></button>
        </div>
      </div>

      <div class="workspace-row">
        <section class="library">
          <div class="lib-search">
            <label class="lib-field"><span class="lib-glass"><svg width="20" height="20"><use href="#i-search"/></svg></span><input aria-label="输入组件名称搜索" placeholder="输入组件名称搜索"></label>
            <button class="filter" aria-label="筛选"><svg width="24" height="22" viewBox="0 0 24 22"><path fill="#ffa800" d="M0 0h22v2l-8 8v12l-6-2V10L0 2zM16 10h8v2h-8zM16 14h8v2h-8zM16 18h8v2h-8z"/></svg></button>
          </div>
          <div class="lib-body">
            <nav class="lib-rail">
              <button class="rail-tab fav"><svg width="24" height="24"><use href="#i-star"/></svg><span>收藏</span></button>
              <button class="rail-tab is-active"><svg width="24" height="24"><use href="#i-puzzle"/></svg><span>标准组件</span></button>
              <button class="rail-tab"><svg width="24" height="24"><use href="#i-module"/></svg><span>小模块</span></button>
              <button class="rail-tab"><svg width="24" height="24"><use href="#i-module"/></svg><span>自定义</span></button>
            </nav>
            <div class="lib-main">
              <div class="lib-collapse"><button aria-label="收起"><svg width="16" height="14" viewBox="0 0 16 14"><path d="M8 0L1 7l7 7M15 0L8 7l7 7" fill="none" stroke="#bbb" stroke-width="1.500"/></svg></button></div>
              <h2>基础元件<i class="caret"></i></h2>
              <div class="tiles tiles-basic">
                <button class="tile"><svg class="ico"><use href="#i-image"/></svg><span>图片</span></button>
                <button class="tile"><svg class="ico"><use href="#i-images"/></svg><span>图片序列</span></button>
                <button class="tile"><b class="ico slab">T</b><span>文本</span></button>
                <button class="tile"><svg class="ico"><use href="#i-lang"/></svg><span>中文字体</span></button>
                <button class="tile"><svg class="ico"><use href="#i-edit"/></svg><span>输入框</span></button>
                <button class="tile"><b class="ico chip chip-btn">Btn</b><span>按钮</span></button>
                <button class="tile"><svg class="ico"><use href="#i-music"/></svg><span>音频</span></button>
                <button class="tile"><svg class="ico"><use href="#i-video"/></svg><span>视频</span></button>
                <button class="tile"><b class="ico chip chip-md">M</b><span>markdown</span></button>
                <button class="tile"><svg class="ico"><use href="#i-doc"/></svg><span>富文本</span></button>
                <button class="tile"><svg class="ico"><use href="#i-mdedit"/><text x="8" y="20" class="md-m">M</text></svg><span>markdown编辑器</span></button>
                <button class="tile"><svg class="ico"><use href="#i-doc2"/></svg><span>富文本编辑器</span></button>
                <button class="tile"><svg class="ico"><use href="#i-web"/></svg><span>网页</span></button>
                <button class="tile"><b class="ico chip chip-icon">Icon</b><span>图标</span></button>
                <button class="tile"><svg class="ico"><use href="#i-count"/></svg><span>计数器</span></button>
                <button class="tile"><svg class="ico"><use href="#i-qr"/></svg><span>二维码</span></button>
                <button class="tile"><svg class="ico"><use href="#i-line"/></svg><span>分割线</span></button>
                <button class="tile"><b class="ico div-word">DIV</b><span>HTML控件</span></button>
                <button class="tile"><svg class="ico"><use href="#i-stream"/></svg><span>视频流</span></button>
              </div>
              <h2>挂件<i class="caret"></i></h2>
              <div class="tiles">
                <button class="tile" disabled><svg class="ico"><use href="#i-drag"/></svg><span>拖拽放缩框</span></button>
              </div>
              <h2>容器组件<i class="caret"></i></h2>
              <div class="tiles tiles-box">
                <button class="tile"><b class="ico chip">for</b><span>循环创建</span></button>
                <button class="tile"><b class="ico chip chip-if">if</b><span>条件容器</span></button>
                <button class="tile" disabled><svg class="ico"><use href="#i-page"/></svg><span>页面</span></button>
                <button class="tile"><svg class="ico"><use href="#i-row"/></svg><span>行</span></button>
                <button class="tile"><svg class="ico"><use href="#i-col"/></svg><span>列</span></button>
                <button class="tile"><svg class="ico"><use href="#i-abs"/></svg><span>绝对定位容器</span></button>
                <button class="tile"><b class="ico chip chip-px">px</b><span>横幅（绝对定位）</span></button>
                <button class="tile"><b class="ico chip chip-px">%</b><span>横幅（相对定位）</span></button>
                <button class="tile"><svg class="ico"><use href="#i-hex"/></svg><span>微前端容器</span></button>
                <button class="tile"><svg class="ico"><use href="#i-form"/></svg><span>表单容器</span></button>
                <button class="tile"><svg class="ico"><use href="#i-carousel"/></svg><span>轮播页容器</span></button>
                <button class="tile"><svg class="ico"><use href="#i-slide"/></svg><span>可滑动容器</span></button>
                <button class="tile"><svg class="ico"><use href="#i-route"/></svg><span>路由容器</span></button>
                <button class="tile"><svg class="ico"><use href="#i-fall"/></svg><span>瀑布流容器</span></button>
                <button class="tile"><svg class="ico"><use href="#i-flip"/></svg><span>翻页容器</span></button>
                <button class="tile"><svg class="ico"><use href="#i-drop"/></svg><span>拖拽放置容器</span></button>
              </div>
            </div>
          </div>
        </section>

        <section class="stage">
          <div class="stage-head">
            <div class="props"><span>登录页面的属性</span><button class="help-dot" aria-label="帮助">?</button><button class="expand" aria-label="展开"><svg width="26" height="24" viewBox="0 0 26 24"><path d="M1 2q6 1 12 5 6-4 12-5M1 10q6 1 12 5 6-4 12-5M1 17q6 1 12 5 6-4 12-5" fill="none" stroke="#ccc" stroke-width="2"/></svg></button></div>
            <div class="ruler"><div class="ruler-lead"></div><div class="ruler-seg">600</div><div class="ruler-seg">700</div><div class="ruler-seg">800</div><div class="ruler-seg">900</div></div>
          </div>
          <div class="canvas">
            <form class="login">
              <svg class="portrait" width="165" height="165" viewBox="0 0 165 165"><circle cx="82" cy="82" r="82"/><path fill="#fff" d="M82 29c18 0 32 14 32 32 0 24-14 39-32 39S50 85 50 61c0-18 14-32 32-32zM21 128c3-12 16-24 35-29 16 15 36 15 52 1 20 5 33 18 34 31-33 38-88 38-121-3z"/></svg>
              <p>点击图片上传头像</p>
              <input aria-label="昵称" placeholder="请输入昵称">
              <button type="button">加入群聊</button>
            </form>
          </div>
        </section>

        <aside class="inspector">
          <div class="ins-head">
            <button class="ins-tab">对象树<svg width="26" height="26" viewBox="0 0 26 26"><path fill="#d0d0d0" d="M13 0l13 8-13 8L0 8z"/><path d="M1 16l12 8 12-8" fill="none" stroke="#d0d0d0" stroke-width="2"/></svg></button>
            <label class="toggle">备注<input type="checkbox"></label>
            <button class="ins-search" aria-label="搜索对象"><svg width="26" height="26"><use href="#i-search"/></svg></button>
          </div>
          <div class="ins-body">
            <ul class="tree">
              <li class="root"><i class="evt"></i><i class="eye"></i><svg class="ico screen-ico"><use href="#i-screen"/></svg><span>[86]在线聊天demo</span><i class="dot none"></i></li>
              <li class="l1"><i class="evt"></i><i class="eye"></i><i class="tri"></i><svg class="ico"><use href="#i-phone"/></svg><span>前台</span><i class="dot"></i></li>
              <li class="l2 data"><i class="evt on"><svg><use href="#i-in"/></svg></i><i class="eye"></i><i class="tri none"></i><svg class="ico"><use href="#i-cubes"/></svg><span>聊天记录</span><i class="dot"></i></li>
              <li class="l2 data"><i class="evt on"><svg><use href="#i-in"/></svg></i><i class="eye"></i><i class="tri none"></i><svg class="ico"><use href="#i-cube"/></svg><span>当前用户信息</span><i class="dot"></i></li>
              <li class="l2 data"><i class="evt on"><svg><use href="#i-in"/></svg></i><i class="eye"></i><i class="tri none"></i><svg class="ico"><use href="#i-cubes"/></svg><span>用户列表</span><i class="dot"></i></li>
              <li class="l2"><i class="evt"></i><i class="eye"></i><i class="tri none"></i><svg class="ico"><use href="#i-net"/></svg><span>群聊连接</span><svg class="note"><use href="#i-info"/></svg><i class="dot"></i></li>
              <li class="l2"><i class="evt"></i><i class="eye"><svg><use href="#i-eye"/></svg></i><i class="tri"></i><svg class="ico"><use href="#i-page"/></svg><span>聊天页面</span><i class="dot"></i></li>
              <li class="l3"><i class="evt"></i><i class="eye"><svg><use href="#i-eye"/></svg></i><i class="tri"></i><svg class="ico"><use href="#i-row"/></svg><span>包裹行</span><i class="dot none"></i></li>
              <li class="l4"><i class="evt"></i><i class="eye"><svg><use href="#i-eye"/></svg></i><i class="tri"></i><svg class="ico"><use href="#i-col"/></svg><span>聊天成员栏</span><i class="dot none"></i></li>
              <li class="l5"><i class="evt"></i><i class="eye"><svg><use href="#i-eye"/></svg></i><i class="tri"></i><svg class="ico"><use href="#i-col"/></svg><span>其他聊天成员</span><i class="dot none"></i></li>
              <li class="l6"><i class="evt on"><svg><use href="#i-out"/></svg></i><i class="eye"></i><i class="tri"></i><b class="ico chip">for</b><span>循环创建1</span><i class="dot none"></i></li>
              <li class="l7"><i class="evt"></i><i class="eye"><svg><use href="#i-eye"/></svg></i><i class="tri"></i><svg class="ico"><use href="#i-row"/></svg><span>用户列表行</span><i class="dot none"></i></li>
              <li class="l8"><i class="evt"></i><i class="eye"><svg><use href="#i-eye"/></svg></i><i class="tri none"></i><b class="ico slab">T</b><span>文本1</span><i class="dot none"></i></li>
              <li class="l8"><i class="evt"></i><i class="eye"><svg><use href="#i-eye"/></svg></i><i class="tri none"></i><svg class="ico"><use href="#i-image"/></svg><span>图片1</span><i class="dot none"></i></li>
              <li class="l5"><i class="evt"></i><i class="eye"><svg><use href="#i-eye"/></svg></i><i class="tri none"></i><b class="ico slab">T</b><span>群内聊天成员</span><i class="dot none"></i></li>
              <li class="l5"><i class="evt"></i><i class="eye"><svg><use href="#i-eye"/></svg></i><i class="tri"></i><svg class="ico"><use href="#i-abs"/></svg><span>当前用户</span><i class="dot none"></i></li>
              <li class="l6"><i class="evt on"><svg><use href="#i-out"/></svg></i><i class="eye"><svg><use href="#i-eye"/></svg></i><i class="tri none"></i><b class="ico slab">T</b><span>昵称</span><i class="dot none"></i></li>
              <li class="l6"><i class="evt on"><svg><use href="#i-out"/></svg></i><i class="eye"><svg><use href="#i-eye"/></svg></i><i class="tri none"></i><svg class="ico"><use href="#i-image"/></svg><span>头像</span><i class="dot none"></i></li>
              <li class="l4"><i class="evt"></i><i class="eye"><svg><use href="#i-eye"/></svg></i><i class="tri"></i><svg class="ico"><use href="#i-col"/></svg><span>包裹列</span><i class="dot none"></i></li>
              <li class="l5"><i class="evt"></i><i class="eye"><svg><use href="#i-eye"/></svg></i><i class="tri"></i><svg class="ico"><use href="#i-col"/></svg><span>发送消息列</span><i class="dot none"></i></li>
              <li class="l6"><i class="evt"></i><i class="eye"><svg><use href="#i-eye"/></svg></i><i class="tri none"></i><b class="ico chip chip-btn">Btn</b><span>发送（按钮）</span><svg class="note"><use href="#i-info"/></svg><i class="dot"></i></li>
              <li class="l6"><i class="evt"></i><i class="eye"><svg><use href="#i-eye"/></svg></i><i class="tri none"></i><svg class="ico"><use href="#i-edit"/></svg><span>消息内容</span><i class="dot"></i></li>
              <li class="l5"><i class="evt"></i><i class="eye"><svg><use href="#i-eye"/></svg></i><i class="tri"></i><svg class="ico"><use href="#i-col"/></svg><span>聊天内容</span><i class="dot"></i></li>
              <li class="l6"><i class="evt on"><svg><use href="#i-out"/></svg></i><i class="eye"></i><i class="tri"></i><b class="ico chip">for</b><span>循环创建1</span><i class="dot none"></i></li>
              <li class="l7"><i class="evt on"><svg><use href="#i-out"/></svg></i><i class="eye"></i><i class="tri"></i><b class="ico chip chip-if">if</b><span>其他人消息</span><i class="dot none"></i></li>
              <li class="l8"><i class="evt"></i><i class="eye"><svg><use href="#i-eye"/></svg></i><i class="tri"></i><svg class="ico"><use href="#i-row"/></svg><span>包裹行</span><i class="dot none"></i></li>
              <li class="l9"><i class="evt"></i><i class="eye"><svg><use href="#i-eye"/></svg></i><i class="tri"></i><svg class="ico"><use href="#i-col"/></svg><span class="cut">其</span><i class="dot none"></i></li>
              <li class="l10"><i class="evt"></i><i class="eye"><svg><use href="#i-eye"/></svg></i><i class="tri none"></i><b class="ico slab">T</b><i class="dot none"></i></li>
            </ul>
            <div class="side">
              <div class="side-top">
                <button aria-label="资源"><svg width="30" height="28"><use href="#i-box"/></svg></button>
                <button aria-label="信息"><svg width="26" height="26"><use href="#i-info"/></svg></button>
                <button class="blue" aria-label="信息组"><svg width="26" height="26"><use href="#i-infos"/></svg></button>
                <button class="blue" aria-label="连线"><svg width="26" height="26"><use href="#i-branch"/></svg></button>
                <button class="blue fx">F<small>(x)</small></button>
                <button class="dim" aria-label="交换"><svg width="24" height="26"><use href="#i-swap"/></svg></button>
                <button aria-label="计时"><svg width="26" height="30"><use href="#i-hour"/></svg></button>
              </div>
              <div class="side-vars">
                <button class="serif">T</button>
                <button class="serif">N</button>
                <button class="serif dec">N<small>.0</small></button>
                <button class="frac"><sup>0</sup>/<sub>1</sub></button>
                <button class="serif var">x</button>
                <button aria-label="一维数组"><svg width="30" height="30"><use href="#i-arr"/></svg></button>
                <button aria-label="二维数组"><svg width="30" height="30"><use href="#i-arr2"/></svg></button>
                <button aria-label="对象"><svg width="26" height="26"><use href="#i-cube"/></svg></button>
                <button aria-label="对象数组"><svg width="30" height="30"><use href="#i-cubes"/></svg></button>
                <button aria-label="时间"><svg width="24" height="24"><use href="#i-time"/></svg></button>
              </div>
              <button class="help"><span>帮助中心</span><svg width="30" height="30" viewBox="0 0 30 30"><path fill="#ffeecb" d="M3 0h24q3 0 3 3v21q0 3-3 3H6l-6 3V3q0-3 3-3z"/><path d="M11 10q0-4 4-4t4 4q0 2-2 3t-2 4M15 19v3" fill="none" stroke="#ff9c12" stroke-width="3"/></svg></button>
            </div>
          </div>
        </aside>
      </div>
    </main>
  </div>
</div>
</body>
</html>
```
FILE: styles.css
```css
* { box-sizing: border-box; }

:root {
  --panel: #353535;
  --deep: #232323;
  --black: #141414;
  --text: #a6a6a6;
  --accent: #ffa800;
}

body {
  margin: 0;
  font-family: "Open Sans", "Noto Sans CJK SC", sans-serif;
  font-size: 20px;
  line-height: 24px;
  color: var(--text);
}

button, input, select {
  margin: 0;
  padding: 0;
  border: 0;
  background: none;
  color: inherit;
  font: inherit;
}

button { display: flex; align-items: center; justify-content: center; }
input, select { outline: none; }
svg { flex: none; display: block; }
i { font-style: normal; }
a { color: inherit; text-decoration: none; }
ul, h2, p { margin: 0; padding: 0; font-weight: inherit; font-size: inherit; }
.sprite { position: absolute; width: 0; height: 0; }

.desktop { display: flex; height: 100vh; overflow: hidden; }

/* taskbar */
.taskbar {
  flex: 0 0 93px;
  display: flex;
  flex-direction: column;
  background: linear-gradient(#dddeeb, #dedeec 50%, #dfe5f1);
  border-bottom: 2px solid #b4b8c4;
}
.task-head { display: grid; grid-auto-rows: 60px; height: 125px; }
.task-apps { display: grid; grid-auto-rows: 67px; gap: 5px; }
.is-current { background: #f2f2f8; }
.is-open { box-shadow: inset 3px 0 #0078d7; }
.is-tall, .is-multi { height: 58px; margin-top: 4px; box-shadow: inset 3px 0 #0078d7; }
.is-multi { box-shadow: inset 3px 0 #0078d7, inset 6px 0 #5ea5e0; }
.qq-tile { display: flex; justify-content: center; padding: 3px 5px; background: #fff; border-radius: 6px; }
.tray { margin-top: auto; display: flex; flex-direction: column; align-items: center; color: #111; padding-bottom: 28px; }
.tray-more { margin: 0 0 8px 42px; }
.tray-grid { display: grid; grid-template-columns: 37px 37px; grid-auto-rows: 36px; align-items: center; justify-items: center; margin-left: 6px; }
.ime { margin-top: 12px; font-weight: 700; color: #fff; -webkit-text-stroke: 1px #444; }
.clock { margin: 62px 0 56px; }
.notice { height: 30px; }

/* browser chrome */
.browser { flex: 1; min-width: 0; display: flex; flex-direction: column; background: #a3c5da; }
.tabstrip { flex: 0 0 51px; display: flex; align-items: center; padding-left: 12px; background: #619bbe; color: #0b1013; font-size: 18px; }
.profile { gap: 9px; width: 116px; height: 42px; padding-left: 3px; justify-content: flex-start; border: 2px solid #101820; border-radius: 21px; }
.bar-btn { flex: none; }
.workspace { margin-left: 27px; }
.tabmenu { margin-left: 38px; }
.tab { display: flex; align-items: center; gap: 14px; height: 51px; }
.tab .x { margin-left: auto; }
.tab-a { width: 359px; margin-left: 29px; padding: 0 16px 0 10px; background: linear-gradient(#33566b, #33566b) left center / 2px 30px no-repeat; }
.tab-b { width: 359px; padding: 0 16px 0 9px; background: linear-gradient(#33566b, #33566b) left center / 2px 30px no-repeat; }
.tab-c { width: 360px; padding: 0 17px 0 11px; background: #a3c5da; border-radius: 12px 12px 0 0; }
.newtab { margin-left: 20px; }
.window-ctl { display: flex; gap: 53px; margin: 0 27px 0 auto; }

.navbar { flex: 0 0 60px; display: flex; align-items: center; padding: 0 18px 0 30px; color: #555; }
.navbar > .bar-btn { width: 24px; margin-right: 42px; }
.address, .quicksearch { display: flex; align-items: center; height: 46px; background: #fff; border: 1px solid #c9d6e0; border-radius: 23px; }
.address { flex: 1; gap: 34px; margin-left: -12px; padding: 0 23px 0 27px; }
.address input { flex: 1; min-width: 0; margin-left: -9px; color: #3a3a3a; }
.quicksearch { width: 329px; margin-left: 15px; padding-left: 26px; gap: 21px; }
.quicksearch input { width: 240px; }
.quicksearch input::placeholder { color: #5c5c5c; opacity: 1; }
.nav-tools { display: flex; align-items: center; gap: 41px; margin-left: 31px; }
.nav-tools .bar-btn { width: 25px; }
.nav-tools .rule { width: 1px; height: 24px; margin: 0 -18px; background: #7d98a8; }

/* application */
.app { flex: 1; min-height: 0; display: flex; flex-direction: column; margin: 0 6px 7px; border-radius: 12px; overflow: hidden; background: var(--black); }
.app-head { flex: 0 0 66px; display: flex; align-items: flex-end; }
.logo { position: relative; display: flex; align-items: center; width: 231px; height: 66px; padding-left: 33px; color: #fff; }
.logo-i { position: absolute; left: 44px; top: 14px; font: italic bold 34px/36px "Liberation Serif", serif; }
.logo-vx { margin-left: 5px; font: 400 42px/42px Lato, sans-serif; }
.logo-cn { margin: 8px 0 0 4px; font-size: 24px; }
.doc-tab { display: flex; align-items: center; height: 53px; border-radius: 8px 8px 0 0; }
.doc-home { width: 122px; padding-left: 17px; gap: 10px; background: #262626; }
.doc-open { width: 248px; margin-left: 2px; padding: 0 16px 0 10px; gap: 8px; background: var(--panel); color: #fff; }
.doc-open .x { margin-left: auto; }
.head-nav { display: flex; align-items: center; height: 66px; margin-left: auto; padding-right: 43px; color: var(--accent); font-size: 23px; }
.head-nav a { margin-right: 65px; }
.head-nav .hd-search { margin-left: -14px; }
.hd-bell { margin-left: 33px; }
.head-nav .rule { width: 2px; height: 20px; margin: 0 24px 0 28px; background: #444; }

.toolbar { flex: 0 0 61px; display: flex; align-items: center; background: var(--panel); border-bottom: 1px solid var(--black); }
.menu { display: flex; gap: 16px; padding-left: 15px; }
.menu button { gap: 6px; }
.panel-ops { display: flex; align-items: center; gap: 3px; height: 40px; margin-left: 9px; padding-left: 9px; border-left: 1px solid #505050; }
.panel-ops button { width: 30px; height: 30px; border-radius: 5px; background: #3f3f3f; color: #686868; }
.panel-ops span { margin-right: -1px; }
.runs { display: flex; gap: 7px; height: 60px; margin-left: auto; font-size: 18px; color: #fff; }
.run { position: relative; display: flex; align-items: center; gap: 8px; padding: 0 11px 0 8px; background: #444; }
.run > button { width: 42px; height: 42px; border-radius: 3px; background: #606060; }
.publish::after { content: ""; position: absolute; right: 0; bottom: 0; border: 3px solid #ddd; border-top-color: transparent; border-left-color: transparent; }
.publish .send { position: relative; background: rgba(110, 110, 110, 0.5); }
.history { position: absolute; left: 37px; top: 10px; display: flex; gap: 6px; color: #777; }
.history button { width: 38px; height: 40px; border-radius: 4px; background: rgba(34, 34, 34, 0.3); }
.view-tools { display: flex; align-items: center; margin-left: 33px; padding-right: 15px; color: #c0c0c0; }
.v-dist { margin: 0 18px 0 17px; }
.screen { width: 281px; height: 40px; padding-left: 18px; background: var(--black); color: #bbb; appearance: none; }
.v-cam { margin: 0 18px 0 19px; }
.view-tools output { width: 65px; text-align: center; color: #fff; }

.workspace-row { flex: 1; min-height: 0; display: flex; }

/* component library */
.library { flex: 0 0 441px; display: flex; flex-direction: column; background: var(--panel); border-right: 1px solid var(--black); }
.lib-search { flex: 0 0 49px; display: flex; gap: 6px; padding: 4px 6px 4px 7px; border-bottom: 1px solid var(--black); }
.lib-field { flex: 1; display: flex; align-items: center; gap: 6px; padding-left: 3px; border-radius: 4px; background: var(--deep); }
.lib-glass { display: flex; align-items: center; justify-content: center; width: 33px; height: 33px; background: var(--panel); }
.lib-field input { flex: 1; }
.lib-field input::placeholder { color: #7e7e7e; opacity: 1; }
.filter { width: 40px; height: 40px; background: #505050; border-radius: 3px; }
.lib-body { flex: 1; min-height: 0; display: flex; }
.lib-rail { flex: 0 0 66px; border-right: 1px solid var(--black); }
.rail-tab { flex-direction: column; justify-content: flex-start; gap: 9px; width: 100%; height: 99px; padding: 8px 12px 0; border-bottom: 1px solid var(--black); line-height: 23px; color: #b0b0b0; }
.rail-tab.fav { padding-top: 21px; height: 98px; }
.rail-tab.is-active { background: var(--black); padding-top: 10px; height: 100px; }
.rail-tab.is-active span { color: #fff; }
.rail-tab span { width: 40px; }
.lib-main { flex: 1; min-width: 0; }
.lib-collapse { display: flex; justify-content: flex-end; height: 20px; border-bottom: 1px solid var(--black); }
.lib-collapse button { width: 30px; background: #505050; }
.lib-main h2 { display: flex; align-items: center; gap: 8px; height: 66px; padding: 0 10px 4px; }
.tiles + h2 { margin-top: 10px; }
.caret, .tri { border: 7px solid transparent; border-top: 10px solid #c8c8c8; border-bottom: 0; }
.tiles { display: grid; grid-template-columns: 1fr 1fr; grid-auto-rows: minmax(39px, 1fr); gap: 10px; padding: 0 10px; }
.tiles-basic { height: 485px; }
.tiles-box { height: 386px; }
.tile { justify-content: flex-start; min-width: 0; padding: 0 2px 0 6px; gap: 7px; border: 1px solid #464646; border-radius: 3px; color: #8a8a8a; }
.tile span { min-width: 0; overflow: hidden; text-overflow: ellipsis; white-space: nowrap; line-height: 36px; }
.tile .ico { color: #cdcdcd; }
.tile .chip { color: #353535; }
.tile:disabled { color: #585858; border-color: #3d3d3d; }
.tile:disabled .ico { color: #4a4a4a; }

.ico { flex: none; width: 30px; height: 30px; }
.slab { font: bold 34px/30px "DejaVu Serif", serif; text-align: left; }
.chip { display: flex; align-items: center; justify-content: center; width: 27px; height: 27px; margin-right: 3px; padding: 0 0 3px; border-radius: 4px; background: #c8c8c8; color: var(--deep); font: bold 14px/20px Inter, sans-serif; }
.chip-btn { width: 28px; height: 20px; margin: 0 1px; padding: 0; font: bold 13px/18px "Liberation Sans", sans-serif; }
.chip-if { font-size: 18px; }
.chip-icon { border-radius: 50%; padding: 0; font: 600 13px/20px "Open Sans", sans-serif; }
.tile .chip-md { width: 30px; height: 21px; margin: 0; padding: 0; border: 2px solid #cdcdcd; background: none; color: #cdcdcd; }
.chip-px { position: relative; width: 22px; height: 22px; margin: 0 0 0 8px; font-size: 13px; }
.chip-px::before { content: ""; position: absolute; left: -8px; top: 6px; border: 5px solid transparent; border-right-color: #cdcdcd; border-left: 0; }
.div-word { font: bold 17px/30px "Open Sans", sans-serif; }
.md-m { fill: currentColor; font: bold 14px Inter, sans-serif; }

/* stage */
.stage { flex: 1; min-width: 0; display: flex; flex-direction: column; }
.stage-head { flex: 0 0 50px; display: flex; border-bottom: 1px solid #3cf; }
.props { flex: 0 0 448px; display: flex; align-items: center; padding: 0 15px 0 18px; background: var(--panel); border-bottom: 1px solid var(--black); }
.help-dot { width: 22px; height: 22px; margin-left: 8px; border-radius: 50%; background: #604c28; color: #fff; font-size: 18px; }
.expand { margin-left: auto; }
.ruler { flex: 1; display: flex; min-width: 0; margin-top: 28px; overflow: hidden; background: repeating-linear-gradient(90deg, transparent 0 15px, #3a3a3a 15px 16px) left bottom / 100% 4px no-repeat, var(--deep); color: #585858; }
.ruler-lead { flex: 0 0 71px; }
.ruler-seg { flex: 0 0 165px; padding-left: 8px; line-height: 22px; font-size: 16px; background: linear-gradient(#543e1c, #543e1c) left bottom / 1px 17px no-repeat; }
.canvas { flex: 1; display: flex; justify-content: center; padding: 461px 0 0 76px; background: #fff; }
.login { display: flex; flex-direction: column; align-items: center; width: 330px; color: #606266; }
.login p { margin: 1px 0 52px; font-size: 26px; line-height: 34px; }
.login input { width: 100%; height: 66px; padding: 2px 17px 0; border: 1px solid #c8c8c8; border-radius: 6px; font-size: 23px; }
.login input::placeholder { color: #b8b8b8; opacity: 1; }
.login button { width: 158px; height: 56px; margin-top: 20px; border-radius: 9px; background: #6fc0ee; color: #fff; font-size: 26px; }

/* object tree */
.inspector { flex: 0 0 518px; display: flex; flex-direction: column; background: var(--deep); }
.ins-head { flex: 0 0 49px; display: flex; align-items: center; background: var(--panel); border-bottom: 1px solid var(--black); }
.ins-tab { gap: 9px; width: 122px; height: 48px; padding-right: 3px; background: var(--deep); color: #eee; }
.toggle { display: flex; align-items: center; gap: 9px; margin-left: 16px; }
.toggle input { appearance: none; width: 46px; height: 27px; border-radius: 14px; background: radial-gradient(circle at 13px 13px, #999 10px, transparent 11px), var(--black); }
.ins-search { margin: 0 16px 0 auto; }
.ins-body { flex: 1; min-height: 0; display: flex; }
.tree { flex: 1; min-width: 0; display: grid; grid-auto-rows: minmax(38px, 1fr); height: calc(100% + 9px); border-right: 1px solid var(--black); list-style: none; }
.tree li { display: flex; align-items: center; min-width: 0; padding-left: 3px; border-bottom: 1px solid var(--black); }
.tree span { flex: 1; min-width: 0; margin-left: 10px; overflow: hidden; text-overflow: ellipsis; white-space: nowrap; line-height: 36px; }
.tree .cut { text-overflow: clip; }
.evt { flex: 0 0 33px; height: 33px; padding: 3px 6px; }
.evt svg { width: 22px; height: 22px; }
.evt.on { background: #2e2e2e; }
.eye { flex: 0 0 39px; color: #f2f2f2; }
.eye svg { width: 20px; height: 16px; margin-left: 10px; }
.tree .ico { color: #c8c8c8; }
.tree .chip { color: var(--deep); }
.tree .data .ico { color: #d6900a; }
.tree .screen-ico { padding: 2px; }
.tri { flex: none; margin: 0 12px 0 6px; border-top-color: #f2f2f2; }
.tri.none { visibility: hidden; }
.dot { flex: none; width: 10px; height: 10px; margin: 0 15px 0 11px; border: 1px solid #b4b4b4; border-radius: 50%; }
.dot.none { visibility: hidden; }
.note { width: 24px; height: 24px; margin: 0 5px; color: #f2f2f2; }
.l2 .eye { margin-right: 33px; }
.l3 .eye { margin-right: 66px; }
.l4 .eye { margin-right: 99px; }
.l5 .eye { margin-right: 132px; }
.l6 .eye { margin-right: 165px; }
.l7 .eye { margin-right: 198px; }
.l8 .eye { margin-right: 231px; }
.l9 .eye { margin-right: 264px; }
.l10 .eye { margin-right: 297px; }

/* variable rail */
.side { flex: 0 0 57px; color: #b4b4b4; }
.side-top { display: grid; grid-auto-rows: 56px; padding: 16px 0 0; border-bottom: 1px solid var(--black); }
.side-vars { display: grid; grid-auto-rows: 49px; padding-top: 4px; color: var(--accent); }
.side .blue { color: #5b8fee; }
.side .dim { color: #6e6e6e; }
.side .fx { font-size: 27px; }
.fx small { font-size: 15px; padding-top: 8px; }
.side .serif { font: 400 32px/40px "Liberation Serif", serif; }
.side .dec { font-size: 26px; }
.dec small { font-size: 20px; padding-top: 4px; }
.side .frac { font-size: 26px; }
.frac sup, .frac sub { font-size: 16px; line-height: 20px; vertical-align: baseline; }
.frac sup { padding-bottom: 10px; margin-right: -2px; }
.frac sub { padding-top: 10px; margin-left: -2px; }
.side .var { font-style: italic; font-weight: bold; font-size: 42px; padding-bottom: 10px; }
.side .help { flex-direction: column; gap: 8px; width: 56px; height: 158px; margin: 19px 0 0 1px; border-radius: 4px; background: var(--accent); color: #fff; }
.help span { width: 22px; font-size: 21px; line-height: 23px; }
```
